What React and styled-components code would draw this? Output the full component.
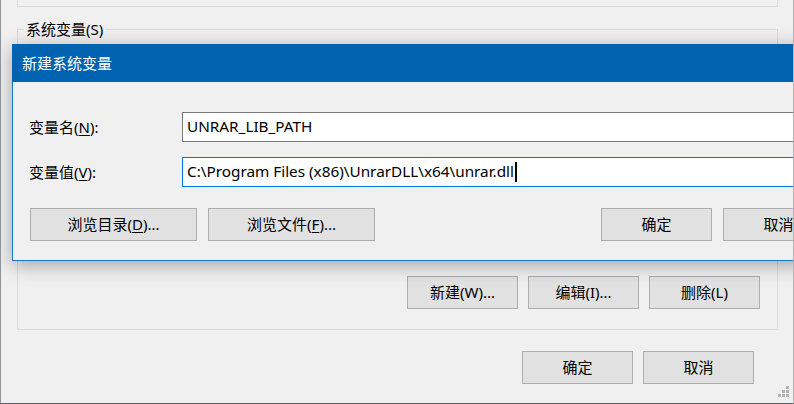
import React from 'react';
import styled, { createGlobalStyle } from 'styled-components';

const Global = createGlobalStyle`
	html, body {
		margin: 0;
		padding: 0;
		background: #f0f0f0;
	}
	body {
		font-family: 'Noto Sans', 'Noto Sans CJK SC', sans-serif;
		font-size: 15px;
		color: #000;
	}
	* { box-sizing: border-box; }
`;

const Screen = styled.div`
	position: relative;
	width: 794px;
	height: 404px;
	overflow: hidden;
	background: #f0f0f0;
	border-left: 1px solid #8e9598;
	border-right: 1px solid #b4b4b4;
	border-bottom: 1px solid #5a6366;
`;

const GroupTail = styled.div`
	margin-left: 16px;
	width: 761px;
	height: 7px;
	border: 1px solid #dcdcdc;
	border-top: none;
`;

const GroupBox = styled.div`
	position: relative;
	margin: 22px 0 0 16px;
	width: 761px;
	height: 301px;
	border: 1px solid #dcdcdc;
	display: flex;
	flex-direction: column;
	justify-content: flex-end;
	padding: 0 17px 20px 0;
`;

const GroupLabel = styled.span`
	position: absolute;
	left: 6px;
	top: -11px;
	padding: 0 2px;
	line-height: 20px;
	background: #f0f0f0;
`;

const ButtonRow = styled.div`
	display: flex;
	justify-content: flex-end;
	gap: 10px;
`;

const Button = styled.div`
	width: ${p => p.$w || 111}px;
	height: 33px;
	background: #e1e1e1;
	border: 1px solid #adadad;
	display: flex;
	align-items: center;
	justify-content: center;
	line-height: 1;
	flex-shrink: 0;
`;

const Footer = styled(ButtonRow)`
	margin-top: 21px;
	padding-right: 39px;
`;

const Grip = styled.svg`
	position: absolute;
	right: 2px;
	bottom: 4px;
`;

const Dialog = styled.div`
	position: absolute;
	left: 11px;
	top: 44px;
	width: 840px;
	height: 217px;
	background: #f0f0f0;
	border: 1px solid #1a79cc;
	border-top: none;
	box-shadow: 0 4px 18px rgba(0, 0, 0, 0.33);
`;

const TitleBar = styled.div`
	height: 38px;
	margin: 0 -1px;
	background: #0063b1;
	color: #fff;
	display: flex;
	align-items: center;
	padding-left: 10px;
	padding-bottom: 1px;
`;

const Body = styled.div`
	padding: 30px 17px 0 16px;
`;

const Form = styled.div`
	display: grid;
	grid-template-columns: 153px 1fr;
	grid-auto-rows: 30px;
	row-gap: 15px;
	align-items: center;
`;

const Label = styled.label`
	line-height: 1;
`;

const Field = styled.div`
	height: 30px;
	background: #fff;
	border: 1px solid ${p => (p.$focused ? '#0078d7' : '#7a7a7a')};
	display: flex;
	align-items: center;
	padding-left: 4px;
	white-space: nowrap;
	font-size: 15.3px;
	line-height: 1;
`;

const Caret = styled.span`
	display: inline-block;
	width: 2px;
	height: 20px;
	margin-left: 1px;
	background: #000;
`;

const DialogButtons = styled.div`
	display: flex;
	margin-top: 21px;
	padding-left: 1px;
`;

const Group = styled(ButtonRow)`
	gap: 11px;
	margin-left: ${p => (p.$right ? 'auto' : '0')};
`;

const Key = styled.u`
	text-decoration-thickness: 1px;
	text-underline-offset: 2px;
`;

export default function App() {
	return (
		<>
			<Global />
			<Screen>
				<GroupTail />
				<GroupBox>
					<GroupLabel>系统变量(S)</GroupLabel>
					<ButtonRow>
						<Button>新建(W)...</Button>
						<Button>编辑(I)...</Button>
						<Button>删除(L)</Button>
					</ButtonRow>
				</GroupBox>
				<Footer>
					<Button>确定</Button>
					<Button>取消</Button>
				</Footer>
				<Grip width="14" height="14" viewBox="0 0 14 14">
					<g fill="#b4b4b4">
						<rect x="9" y="1" width="3" height="3" />
						<rect x="5" y="5" width="3" height="3" />
						<rect x="9" y="5" width="3" height="3" />
						<rect x="1" y="9" width="3" height="3" />
						<rect x="5" y="9" width="3" height="3" />
						<rect x="9" y="9" width="3" height="3" />
					</g>
				</Grip>

				<Dialog>
					<TitleBar>新建系统变量</TitleBar>
					<Body>
						<Form>
							<Label>变量名(<Key>N</Key>):</Label>
							<Field>UNRAR_LIB_PATH</Field>
							<Label>变量值(<Key>V</Key>):</Label>
							<Field $focused>
								C:\Program Files (x86)\UnrarDLL\x64\unrar.dll
								<Caret />
							</Field>
						</Form>
						<DialogButtons>
							<Group>
								<Button $w={167}>浏览目录(<Key>D</Key>)...</Button>
								<Button $w={167}>浏览文件(<Key>F</Key>)...</Button>
							</Group>
							<Group $right>
								<Button>确定</Button>
								<Button>取消</Button>
							</Group>
						</DialogButtons>
					</Body>
				</Dialog>
			</Screen>
		</>
	);
}
